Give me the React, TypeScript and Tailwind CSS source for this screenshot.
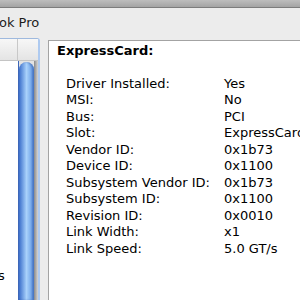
import React from "react";

const rows: [string, string][] = [
  ["Driver Installed:", "Yes"],
  ["MSI:", "No"],
  ["Bus:", "PCI"],
  ["Slot:", "ExpressCard"],
  ["Vendor ID:", "0x1b73"],
  ["Device ID:", "0x1100"],
  ["Subsystem Vendor ID:", "0x1b73"],
  ["Subsystem ID:", "0x1100"],
  ["Revision ID:", "0x0010"],
  ["Link Width:", "x1"],
  ["Link Speed:", "5.0 GT/s"],
];

export default function App() {
  return (
    <div
      className="w-[300px] h-[300px] overflow-hidden flex flex-col bg-[#ececec] text-black"
      style={{ fontFamily: '"DejaVu Sans", "Liberation Sans", sans-serif' }}
    >
      {/* window title strip */}
      <div className="h-[8px] shrink-0 bg-gradient-to-b from-[#bdbdbd] to-[#a4a4a4] border-b border-[#7c7c7c]" />

      {/* path bar */}
      <div className="h-[30px] shrink-0 bg-[#ececec] pl-0 pt-[7px] text-[13px] leading-[16px] text-[#1c1c1c] whitespace-nowrap">
        <span className="-ml-[1px]">ok Pro</span>
      </div>

      <div className="flex flex-1 min-h-0">
        {/* left source list with focus ring */}
        <div className="w-[40px] shrink-0 flex flex-col border-t border-[#9eb9de] border-r-2 border-r-[#aecaf0] rounded-tr-[3px]">
          <div className="h-[22px] shrink-0 flex border-b border-[#c4c4c4] bg-gradient-to-b from-[#f7f7f7] to-[#e4e4e4]">
            <div className="w-[18px] border-r border-[#c8c8c8]" />
            <div className="flex-1" />
          </div>
          <div className="flex flex-1 min-h-0">
            <div className="w-[18px] bg-white flex flex-col justify-end pb-[16px] overflow-hidden">
              <span className="text-[13px] leading-[16px] -ml-[2px]">s</span>
            </div>
            <div className="w-[20px] bg-[#e3e3e3] border-l border-[#3d66b8] flex">
              <div className="w-[15px] mt-[1px] rounded-t-full bg-gradient-to-r from-[#3b6dc9] via-[#a9d1fb] to-[#5c93e0] shadow-[inset_-2px_0_2px_rgba(30,60,140,0.35)]" />
              <div className="flex-1 bg-gradient-to-r from-[#8a8a8a] to-[#d6d6d6]" />
            </div>
          </div>
        </div>

        <div className="w-[8px] shrink-0" />

        {/* detail pane */}
        <div className="flex-1 mt-[2px] bg-white border-t border-l border-[#a3a3a3] pl-[8px] pt-[2px] text-[13px] leading-[16.5px] whitespace-nowrap overflow-hidden">
          <div className="font-bold">ExpressCard:</div>
          <div className="mt-[16px] pl-[9px] grid grid-cols-[158px_auto]">
            {rows.map(([label, value]) => (
              <React.Fragment key={label}>
                <div>{label}</div>
                <div>{value}</div>
              </React.Fragment>
            ))}
          </div>
        </div>
      </div>
    </div>
  );
}
